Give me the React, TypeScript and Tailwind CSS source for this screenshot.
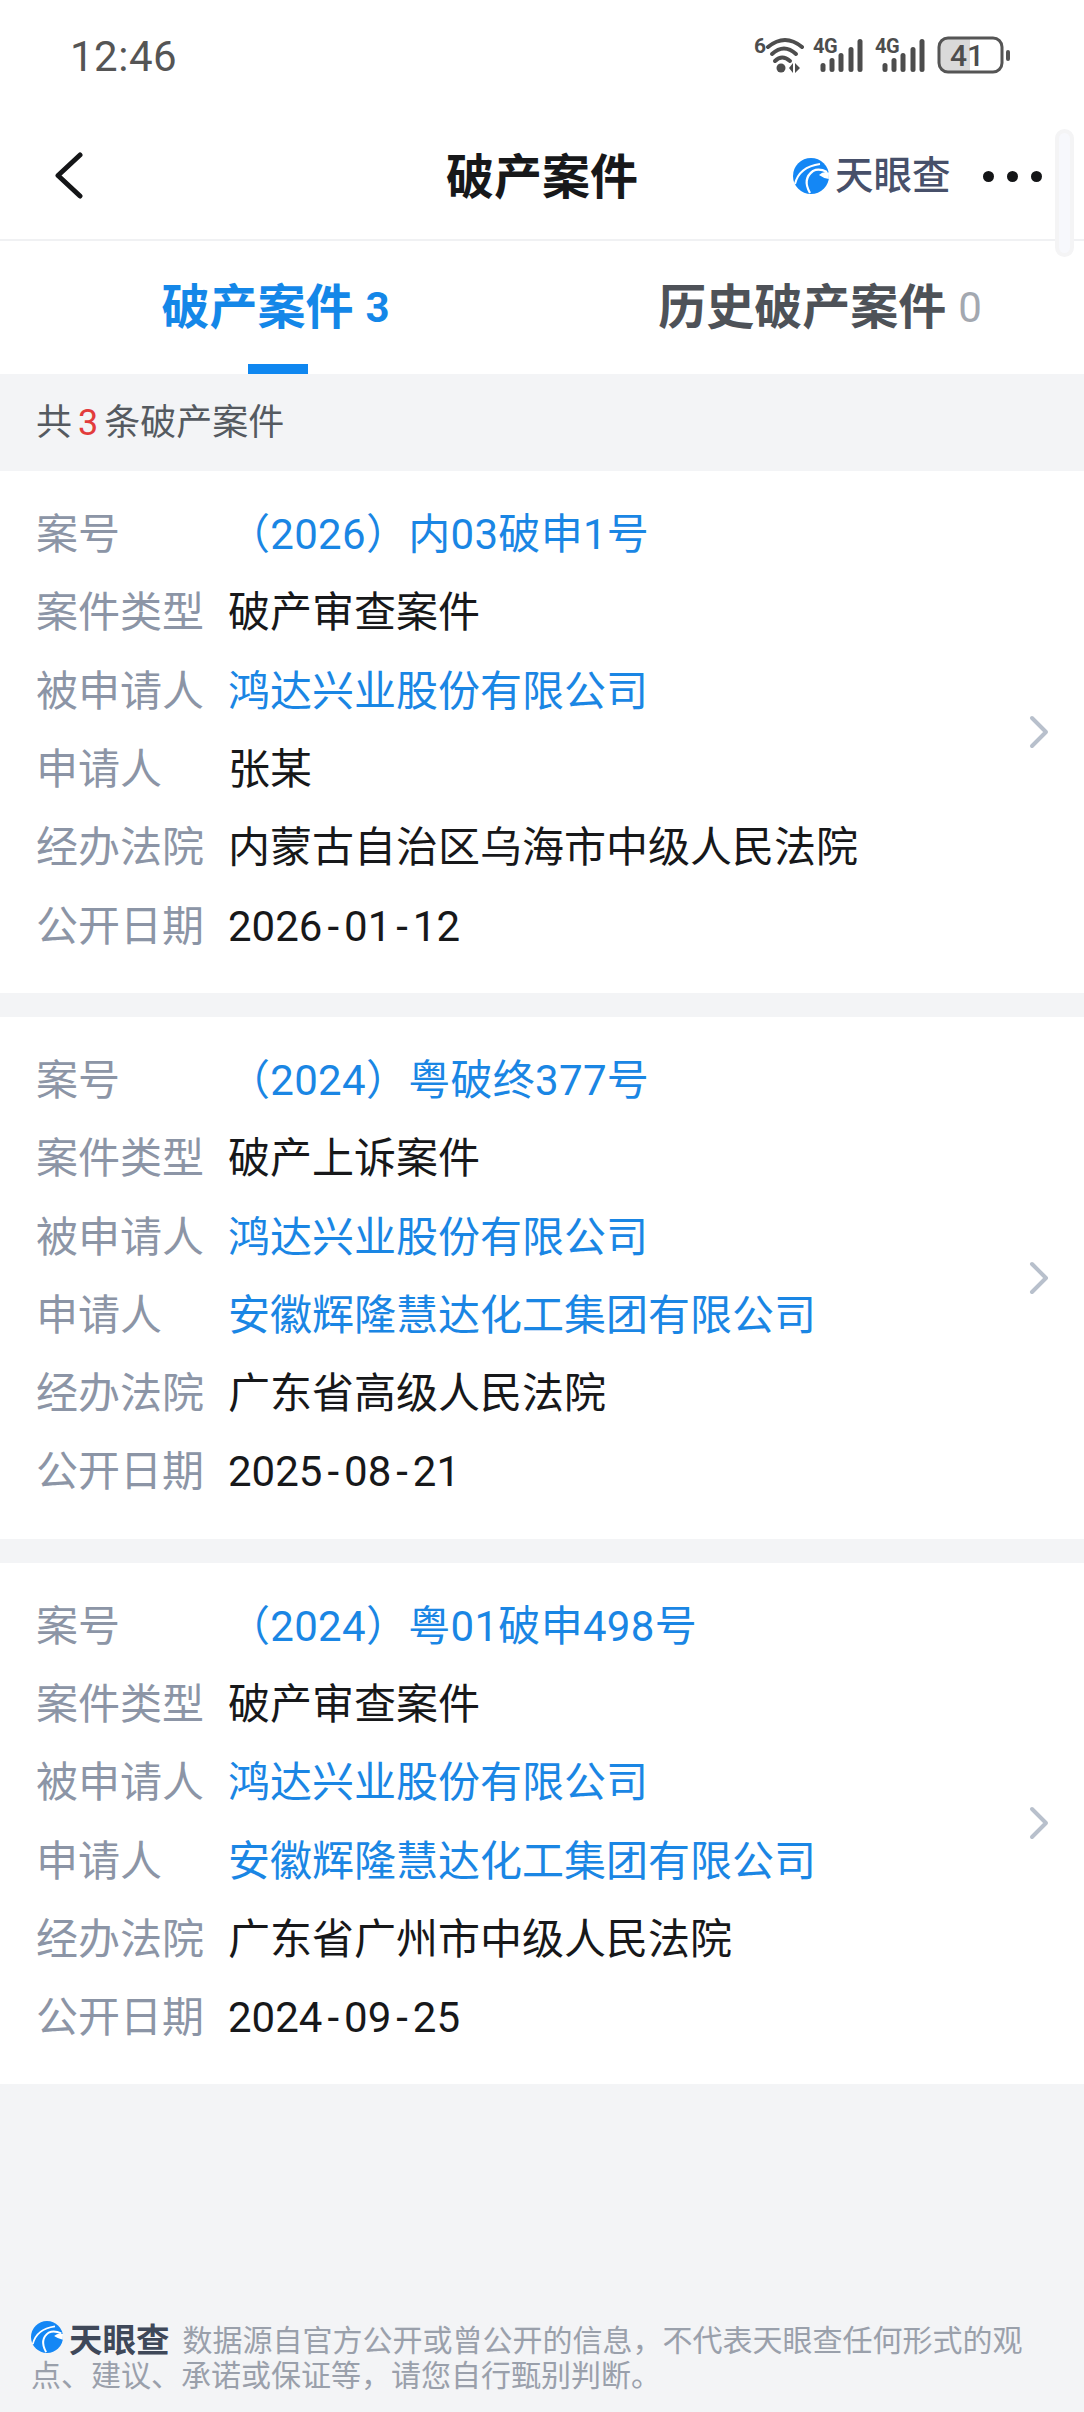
import { Fragment } from 'react';

const cases = [
  {
    no: '（2026）内03破申1号',
    type: '破产审查案件',
    respondent: '鸿达兴业股份有限公司',
    applicant: '张某',
    applicantLink: false,
    court: '内蒙古自治区乌海市中级人民法院',
    date: '2026-01-12',
  },
  {
    no: '（2024）粤破终377号',
    type: '破产上诉案件',
    respondent: '鸿达兴业股份有限公司',
    applicant: '安徽辉隆慧达化工集团有限公司',
    applicantLink: true,
    court: '广东省高级人民法院',
    date: '2025-08-21',
  },
  {
    no: '（2024）粤01破申498号',
    type: '破产审查案件',
    respondent: '鸿达兴业股份有限公司',
    applicant: '安徽辉隆慧达化工集团有限公司',
    applicantLink: true,
    court: '广东省广州市中级人民法院',
    date: '2024-09-25',
  },
];

function LogoMark({ className }: { className: string }) {
  return (
    <svg viewBox="0 0 36 36" className={className}>
      <circle cx="18" cy="18" r="18" fill="#1487f5" />
      <path d="M2 26Q6 9 27 6" stroke="#fff" strokeWidth="2" fill="none" />
      <path d="M17 35Q9 21 20 13Q26 10 34 14" stroke="#fff" strokeWidth="2.2" fill="none" />
      <path d="M36 14.5Q30 13 26 17Q30 20 35.8 21Z" fill="#fff" />
    </svg>
  );
}

function StatusIcons() {
  const bars = [
    [823, 63],
    [832, 58],
    [841, 53],
    [851, 47],
    [860, 39],
  ];
  return (
    <svg viewBox="750 35 262 40" className="h-[40px] w-[262px]">
      <text x="754" y="53" fontSize="21" fontWeight="700" fill="#4d4d4d" fontFamily="Roboto, sans-serif">6</text>
      <path d="M768 47Q785 33 802 47" stroke="#4d4d4d" strokeWidth="4" fill="none" strokeLinecap="round" />
      <path d="M772 54Q784 43 796 54" stroke="#4d4d4d" strokeWidth="4" fill="none" strokeLinecap="round" />
      <path d="M775 61Q782 54 790 61" stroke="#4d4d4d" strokeWidth="4" fill="none" strokeLinecap="round" />
      <circle cx="781" cy="68" r="4.5" fill="#4d4d4d" />
      <path d="M789 68L793 63V73ZM795 63L800 68L795 73Z" fill="#4d4d4d" />
      {[0, 62].map((dx) => (
        <Fragment key={dx}>
          <text x={813 + dx} y="53" fontSize="20" fontWeight="700" fill="#4d4d4d" fontFamily="Roboto, sans-serif" letterSpacing="-0.5">4G</text>
          {bars.map(([x, y]) => (
            <rect key={x} x={x + dx - 2.5} y={y} width="5" height={72 - y} rx="2.5" fill="#4d4d4d" />
          ))}
        </Fragment>
      ))}
      <path d="M939 47a9 9 0 0 1 9-9h22v34h-22a9 9 0 0 1-9-9Z" fill="#d9d9d9" />
      <rect x="939" y="38" width="63" height="34" rx="9" fill="none" stroke="#555" strokeWidth="3" />
      <rect x="1006" y="50" width="4" height="11" rx="2" fill="#555" />
      <text x="950" y="66" fontSize="30" fontWeight="500" fill="#4d4d4d" fontFamily="Roboto, sans-serif">41</text>
    </svg>
  );
}

function Row({ label, value, link }: { label: string; value: React.ReactNode; link?: boolean }) {
  return (
    <div className="flex h-[78.3px] items-center">
      <div className="w-[192px] shrink-0 text-[#8c95a6]">{label}</div>
      <div className={link ? 'text-[#1a86e4]' : 'text-[#17181a]'}>{value}</div>
    </div>
  );
}

// the hyphens in the dates sit wider apart than Roboto sets them
function DateText({ date }: { date: string }) {
  const [y, m, d] = date.split('-');
  return (
    <>
      {y}
      <span className="mx-[5px]">-</span>
      {m}
      <span className="mx-[5px]">-</span>
      {d}
    </>
  );
}

export default function App() {
  return (
    <div className="relative flex min-h-[2412px] w-[1084px] flex-col overflow-hidden bg-[#f3f4f6] font-['Roboto','Noto_Sans_CJK_SC',sans-serif]">
      {/* Status bar */}
      <div className="flex h-[113px] items-start justify-between bg-white pr-[72px] pl-[70px]">
        <span className="mt-[31px] text-[42px] leading-[52px] tracking-[0.5px] text-[#555]">12:46</span>
        <div className="mt-[35px] flex">
          <StatusIcons />
        </div>
      </div>

      {/* Header */}
      <div className="relative flex h-[128px] items-center justify-center border-b-2 border-[#f0f1f3] bg-white pt-[4px]">
        <svg viewBox="0 0 30 47" className="absolute top-[39px] left-[54px] h-[47px] w-[30px]">
          <path d="M26 3L4 23.5L26 44" stroke="#141517" strokeWidth="5" fill="none" strokeLinecap="round" strokeLinejoin="round" />
        </svg>
        <span className="text-[48px] leading-none font-bold text-[#17181a]">破产案件</span>
        <div className="absolute top-[44px] left-[793px] flex items-center gap-[6px]">
          <LogoMark className="h-[36px] w-[36px]" />
          <span className="text-[38.5px] leading-none font-medium text-[#47506a]">天眼查</span>
        </div>
        <div className="absolute top-[58px] left-[983px] flex gap-[13px]">
          <span className="h-[11px] w-[11px] rounded-full bg-[#141517]" />
          <span className="h-[11px] w-[11px] rounded-full bg-[#141517]" />
          <span className="h-[11px] w-[11px] rounded-full bg-[#141517]" />
        </div>
      </div>

      {/* Tabs */}
      <div className="flex h-[133px] bg-white">
        <div className="relative flex w-[542px] items-center justify-center pl-[9px] text-[48px] leading-none font-bold text-[#1487e8]">
          <span>破产案件</span>
          <span className="ml-[12px] text-[42px]">3</span>
          <span className="absolute right-[234px] bottom-0 h-[10px] w-[60px] bg-[#0f87f0]" />
        </div>
        <div className="flex w-[542px] items-center justify-center pl-[14px] text-[48px] leading-none font-bold text-[#4e5258]">
          <span>历史破产案件</span>
          <span className="ml-[12px] text-[42px] font-normal text-[#a3a8b0]">0</span>
        </div>
      </div>

      {/* Count */}
      <div className="flex h-[97px] items-center pt-[1px] pl-[36px] text-[36px] text-[#555a60]">
        共<span className="mx-[6px] text-[#e23c3c]">3</span>条破产案件
      </div>

      {/* Cases */}
      <div className="flex flex-col gap-[24px]">
        {cases.map((c) => (
          <div key={c.no} className="relative bg-white pt-[25px] pr-[60px] pb-[27px] pl-[36px] text-[42px] leading-none">
            <Row label="案号" value={<span className="tracking-[0.3px]">{c.no}</span>} link />
            <Row label="案件类型" value={c.type} />
            <Row label="被申请人" value={c.respondent} link />
            <Row label="申请人" value={c.applicant} link={c.applicantLink} />
            <Row label="经办法院" value={c.court} />
            <Row label="公开日期" value={<DateText date={c.date} />} />
            <svg viewBox="0 0 24 36" className="absolute top-1/2 right-[33px] h-[36px] w-[24px] -translate-y-1/2">
              <path d="M5 4L19 18L5 32" stroke="#b8c0cc" strokeWidth="4" fill="none" strokeLinecap="round" strokeLinejoin="round" />
            </svg>
          </div>
        ))}
      </div>

      {/* Disclaimer */}
      <div className="mt-auto pb-[19px] pl-[31px] text-[30px] leading-[35px] whitespace-nowrap text-[#9aa0ab]">
        <div className="flex h-[35px] items-center">
          <LogoMark className="-mt-[2px] mr-[6px] h-[32px] w-[32px] self-start" />
          <span className="mr-[13px] text-[33.5px] font-bold text-[#3f4859]">天眼查</span>
          <span>数据源自官方公开或曾公开的信息，不代表天眼查任何形式的观</span>
        </div>
        <div>点、建议、承诺或保证等，请您自行甄别判断。</div>
      </div>

      {/* Scroll handle over the header */}
      <div className="absolute top-[129px] left-[1055px] h-[128px] w-[19px] rounded-full border-[4px] border-[#f4f4f5] bg-[#f7f8fc]" />
    </div>
  );
}
